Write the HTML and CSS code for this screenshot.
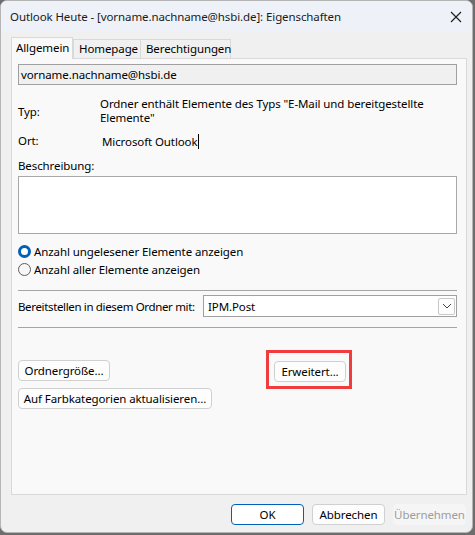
FILE: index.html
```html
<!DOCTYPE html>
<html lang="de">
<head>
<meta charset="utf-8">
<title>Outlook Heute - Eigenschaften</title>
<link rel="stylesheet" href="styles.css">
</head>
<body>
<div class="window">
  <div class="titlebar">
    <span class="title">Outlook Heute - [vorname.nachname@hsbi.de]: Eigenschaften</span>
    <svg class="close" width="12" height="12" viewBox="0 0 12 12"><path d="M1 1 L11 11 M11 1 L1 11" stroke="#1a1a1a" stroke-width="1.1" fill="none"/></svg>
  </div>
  <div class="content">
    <div class="tabs">
      <div class="tab active">Allgemein</div>
      <div class="tab tab-home">Homepage</div>
      <div class="tab tab-perm">Berechtigungen</div>
    </div>
    <div class="panel">
      <div class="namefield">vorname.nachname@hsbi.de</div>
      <div class="row row-typ">
        <div class="label label-typ">Typ:</div>
        <div class="value">Ordner enthält Elemente des Typs "E-Mail und bereitgestellte Elemente"</div>
      </div>
      <div class="row row-ort">
        <div class="label">Ort:</div>
        <div class="value value-ort">Microsoft Outlook<span class="caret"></span></div>
      </div>
      <div class="label desc-label">Beschreibung:</div>
      <div class="textarea"></div>
      <div class="radios">
        <div class="radio-row"><span class="radio checked"></span>Anzahl ungelesener Elemente anzeigen</div>
        <div class="radio-row"><span class="radio"></span>Anzahl aller Elemente anzeigen</div>
      </div>
      <div class="sep"></div>
      <div class="post-row">
        <span class="post-label">Bereitstellen in diesem Ordner mit:</span>
        <div class="select">
          <span class="select-text">IPM.Post</span>
          <span class="select-btn">
            <svg width="10" height="6" viewBox="0 0 10 6"><path d="M1 1 L5 5 L9 1" stroke="#444" stroke-width="1" fill="none"/></svg>
          </span>
        </div>
      </div>
      <div class="sep sep2"></div>
      <div class="btn-row">
        <button class="btn btn-size">Ordnergröße...</button>
        <div class="adv-wrap">
          <button class="btn btn-adv">Erweitert...</button>
          <span class="highlight"></span>
        </div>
      </div>
      <div class="btn-row btn-row2">
        <button class="btn btn-cat">Auf Farbkategorien aktualisieren...</button>
      </div>
    </div>
    <div class="footer">
      <button class="btn fbtn ok">OK</button>
      <button class="btn fbtn">Abbrechen</button>
      <button class="btn fbtn disabled">Übernehmen</button>
    </div>
  </div>
</div>
</body>
</html>
```
FILE: styles.css
```css
* { box-sizing: border-box; }
html, body { margin: 0; padding: 0; }
body {
  width: 475px;
  height: 535px;
  background: #6d6d6d;
  font-family: "Noto Sans", "Open Sans", sans-serif;
  font-size: 11.5px;
  letter-spacing: -0.1px;
  color: #000;
  overflow: hidden;
  white-space: nowrap;
}
.window {
  width: 473px;
  height: 533px;
  background: #f0f0f0;
  border: 1px solid #b5b5b5;
  border-radius: 7px;
  display: flex;
  flex-direction: column;
  overflow: hidden;
}
.titlebar {
  height: 31px;
  background: #eef2f8;
  display: flex;
  align-items: center;
  justify-content: space-between;
  padding: 0 9px 0 9px;
  flex: none;
}
.title { color: #1a1a1a; }
.close { margin-right: 1px; }
.content {
  flex: 1;
  display: flex;
  flex-direction: column;
  padding: 5px 5px 0 10px;
}
.tabs {
  display: flex;
  align-items: flex-end;
  height: 21px;
  position: relative;
  z-index: 1;
}
.tab {
  height: 19px;
  line-height: 17px;
  border: 1px solid #d9d9d9;
  border-bottom: none;
  background: #f0f0f0;
  padding: 0 0 0 5px;
  color: #000;
  margin-left: -1px;
}
.tab.active {
  height: 22px;
  line-height: 20px;
  background: #f9f9f9;
  margin-left: 0;
  width: 62px;
  padding: 0 0 0 4px;
  margin-bottom: -1px;
}
.tab-home { width: 68px; margin-left: 0; }
.tab-perm { width: 91px; }
.panel {
  width: 456px;
  height: 437px;
  background: #f9f9f9;
  border: 1px solid #d9d9d9;
  padding: 5px 9px 0 6px;
  display: flex;
  flex-direction: column;
}
.namefield {
  height: 21px;
  background: #f0f0f0;
  border: 1px solid #a0a0a0;
  line-height: 19px;
  padding-left: 2px;
}
.row { display: flex; }
.label { width: 82px; flex: none; line-height: 14px; }
.value { line-height: 14px; flex: 1; padding-right: 30px; white-space: normal; }
.row-typ { margin-top: 12px; }
.label-typ { padding-top: 8px; }
.row-ort { margin-top: 9px; }
.value-ort { padding-left: 2px; }
.caret {
  display: inline-block;
  width: 1px;
  height: 15px;
  background: #000;
  vertical-align: -3px;
}
.desc-label { margin-top: 10px; width: auto; }
.textarea {
  margin-top: 3px;
  height: 58px;
  background: #fff;
  border: 1px solid #a8a8a8;
}
.radios { margin-top: 8px; }
.radio-row {
  height: 18px;
  display: flex;
  align-items: center;
}
.radio {
  width: 13px;
  height: 13px;
  border-radius: 50%;
  border: 1px solid #5d5d5d;
  background: #f7f7f7;
  margin-right: 3px;
  flex: none;
}
.radio.checked {
  border: 3.5px solid #005fb8;
  background: #fff;
}
.sep {
  margin-top: 12px;
  height: 1px;
  background: #a5a5a5;
}
.post-row {
  margin-top: 4px;
  display: flex;
  align-items: center;
  height: 22px;
}
.post-label { width: 185px; flex: none; letter-spacing: -0.35px; }
.select {
  flex: 1;
  height: 22px;
  background: #fff;
  border: 1px solid #a0a0a0;
  display: flex;
  align-items: center;
  justify-content: space-between;
  padding: 0 1px 0 4px;
}
.select-btn {
  width: 17px;
  height: 17px;
  border: 1px solid #c8c8c8;
  border-radius: 2px;
  display: flex;
  align-items: center;
  justify-content: center;
  background: #fdfdfd;
}
.sep2 { margin-top: 10px; }
.btn {
  font-family: inherit;
  font-size: 11.5px;
  letter-spacing: -0.1px;
  color: #000;
  background: #fdfdfd;
  border: 1px solid #d0d0d0;
  border-radius: 4px;
  height: 21px;
  padding: 0;
  margin: 0;
  white-space: nowrap;
}
.btn-row { display: flex; align-items: flex-start; margin-top: 32px; }
.btn-row2 { margin-top: 6px; }
.btn-size { width: 92px; }
.btn-cat { width: 194px; }
.adv-wrap { position: relative; margin-left: 164px; margin-top: 1px; }
.btn-adv { width: 72px; }
.highlight {
  position: absolute;
  left: -8px;
  top: -11px;
  width: 86px;
  height: 39px;
  border: 3px solid #ef3d3d;
}
.footer {
  display: flex;
  justify-content: flex-end;
  gap: 8px;
  margin-top: 9px;
  padding-right: 1px;
}
.fbtn { width: 73px; }
.ok { border: 1px solid #005fb8; background: #fff; }
.disabled { color: #9d9d9d; border-color: #f5f5f5; background: #f5f5f5; }
```
